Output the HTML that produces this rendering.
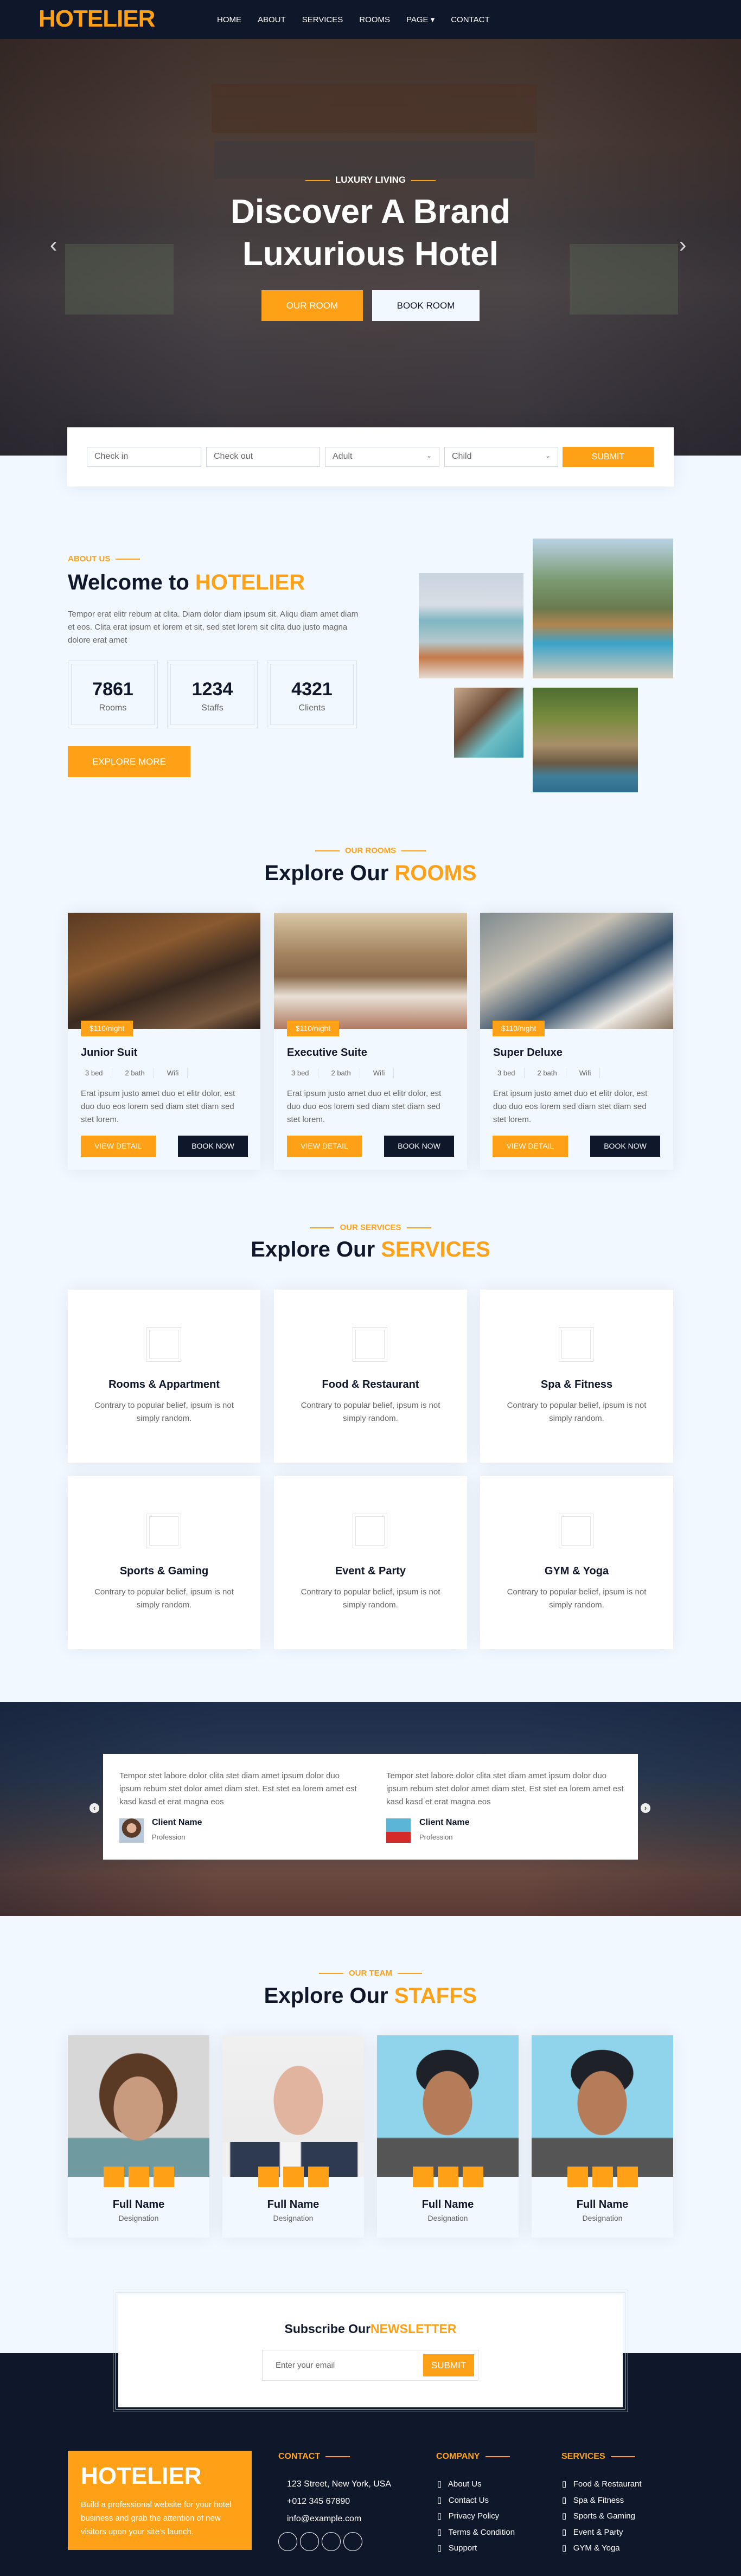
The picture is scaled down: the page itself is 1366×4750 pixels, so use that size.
<!DOCTYPE html>
<html><head><meta charset="utf-8">
<style>
*{margin:0;padding:0;box-sizing:border-box}
body{width:1366px;height:4750px;position:relative;background:#F1F8FF;font-family:"Liberation Sans",Arial,sans-serif;color:#666565;overflow:hidden}
.a{position:absolute}
.or{color:#FEA116}
.c{text-align:center}
.lbl{font-size:15px;font-weight:bold;color:#FEA116;text-transform:uppercase;white-space:nowrap}
.ln{display:inline-block;width:45px;height:2px;background:#FEA116;vertical-align:middle;margin:0 10px}
.h2{font-size:40px;font-weight:bold;color:#0F172B;width:1366px;left:0;text-align:center}
.btn{background:#FEA116;color:#fff;font-size:15px;text-align:center;text-transform:uppercase}
.card{background:#F1F8FF;box-shadow:0 0 30px rgba(0,0,0,.08)}
.wcard{background:#fff;box-shadow:0 0 30px rgba(0,0,0,.07)}
.ic{width:64px;height:64px;border:1px solid #e2e2e2;padding:4px}
.ic div{width:100%;height:100%;border:1px solid #e2e2e2}
.inp{background:#fff;border:1px solid #ced4da;height:37px;font-size:16px;color:#666;padding:8px 13px}
</style></head><body>

<!-- NAV -->
<div class="a" style="left:0;top:0;width:1366px;height:72px;background:#0F172B"></div>
<div class="a" style="left:71px;top:10px;font-size:44px;font-weight:bold;color:#FEA116;letter-spacing:-1px">HOTELIER</div>
<div class="a" style="left:400px;top:27px;font-size:15px;color:#fff;white-space:nowrap">
<span style="margin-right:30px">HOME</span><span style="margin-right:30px">ABOUT</span><span style="margin-right:30px">SERVICES</span><span style="margin-right:30px">ROOMS</span><span style="margin-right:30px">PAGE ▾</span><span>CONTACT</span></div>

<!-- HERO -->
<div class="a" style="left:0;top:72px;width:1366px;height:768px;background:linear-gradient(#3e2e28 0%,#4a3a34 25%,#3f3a3e 45%,#4a4448 60%,#3e3a42 75%,#2f2d38 100%)"></div>
<div class="a" style="left:0;top:72px;width:1366px;height:768px;background:linear-gradient(90deg,rgba(30,25,30,.35),rgba(90,80,70,.15) 30%,rgba(90,70,55,.2) 50%,rgba(90,80,70,.15) 70%,rgba(30,25,30,.35))"></div>
<div class="a" style="left:390px;top:155px;width:600px;height:90px;background:#4b3328;opacity:.7"></div>
<div class="a" style="left:395px;top:260px;width:590px;height:70px;background:#3e3a3e;opacity:.6"></div>
<div class="a" style="left:120px;top:450px;width:200px;height:130px;background:#56604f;opacity:.5"></div>
<div class="a" style="left:1050px;top:450px;width:200px;height:130px;background:#56604f;opacity:.5"></div>
<div class="a" style="left:92px;top:430px;font-size:40px;color:#ddd">‹</div>
<div class="a" style="left:1252px;top:430px;font-size:40px;color:#ddd">›</div>
<div class="a c" style="left:0;width:1366px;top:322px;font-size:17px;font-weight:bold;color:#fff"><span class="ln"></span>LUXURY LIVING<span class="ln"></span></div>
<div class="a c" style="left:0;width:1366px;top:352px;font-size:62px;font-weight:bold;color:#fff;line-height:78px">Discover A Brand<br>Luxurious Hotel</div>
<div class="a btn" style="left:482px;top:535px;width:187px;height:57px;line-height:57px;font-size:17px">OUR ROOM</div>
<div class="a" style="left:686px;top:535px;width:198px;height:57px;line-height:57px;background:#F1F8FF;color:#0F172B;text-align:center;font-size:17px">BOOK ROOM</div>

<!-- BOOKING -->
<div class="a" style="left:124px;top:788px;width:1118px;height:109px;background:#fff;box-shadow:0 0 30px rgba(0,0,0,.08)"></div>
<div class="a inp" style="left:160px;top:824px;width:211px">Check in</div>
<div class="a inp" style="left:380px;top:824px;width:210px">Check out</div>
<div class="a inp" style="left:599px;top:824px;width:211px">Adult<span style="float:right;font-size:12px">⌄</span></div>
<div class="a inp" style="left:819px;top:824px;width:210px">Child<span style="float:right;font-size:12px">⌄</span></div>
<div class="a btn" style="left:1037px;top:824px;width:168px;height:37px;line-height:37px;font-size:16px">SUBMIT</div>

<!-- ABOUT -->
<div class="a lbl" style="left:125px;top:1022px">ABOUT US<span class="ln"></span></div>
<div class="a" style="left:125px;top:1052px;font-size:40px;font-weight:bold;color:#0F172B;white-space:nowrap">Welcome to <span class="or">HOTELIER</span></div>
<div class="a" style="left:125px;top:1121px;width:540px;font-size:15px;line-height:24px">Tempor erat elitr rebum at clita. Diam dolor diam ipsum sit. Aliqu diam amet diam et eos. Clita erat ipsum et lorem et sit, sed stet lorem sit clita duo justo magna dolore erat amet</div>
<div class="a" style="left:125px;top:1218px;width:166px;height:125px;border:1px solid #dee2e6;padding:5px"><div style="border:1px solid #dee2e6;height:100%;text-align:center;padding-top:27px"><div style="font-size:34px;font-weight:bold;color:#0F172B">7861</div><div style="font-size:16px;margin-top:6px">Rooms</div></div></div>
<div class="a" style="left:308px;top:1218px;width:167px;height:125px;border:1px solid #dee2e6;padding:5px"><div style="border:1px solid #dee2e6;height:100%;text-align:center;padding-top:27px"><div style="font-size:34px;font-weight:bold;color:#0F172B">1234</div><div style="font-size:16px;margin-top:6px">Staffs</div></div></div>
<div class="a" style="left:492px;top:1218px;width:166px;height:125px;border:1px solid #dee2e6;padding:5px"><div style="border:1px solid #dee2e6;height:100%;text-align:center;padding-top:27px"><div style="font-size:34px;font-weight:bold;color:#0F172B">4321</div><div style="font-size:16px;margin-top:6px">Clients</div></div></div>
<div class="a btn" style="left:125px;top:1376px;width:226px;height:57px;line-height:57px;font-size:17px">EXPLORE MORE</div>
<div class="a" style="left:772px;top:1057px;width:193px;height:194px;background:linear-gradient(#c9d4e0 0%,#d9dde4 30%,#7fb6c2 45%,#b4c7cc 65%,#c47a4a 80%,#e4dcd4 100%)"></div>
<div class="a" style="left:982px;top:993px;width:259px;height:258px;background:linear-gradient(#b9d3e6 0%,#7a9a70 30%,#6b7a50 50%,#b08550 62%,#3aa3c8 75%,#d8ccbb 100%)"></div>
<div class="a" style="left:837px;top:1268px;width:128px;height:129px;background:linear-gradient(135deg,#c9a98c 0%,#6a4a35 40%,#6dbdc5 65%,#3a9aae 100%)"></div>
<div class="a" style="left:982px;top:1268px;width:194px;height:193px;background:linear-gradient(#4f6e32 0%,#7a8c3e 30%,#a88f6a 55%,#6c5a44 72%,#3f7e9a 85%,#2f6e8e 100%)"></div>

<!-- ROOMS -->
<div class="a lbl c" style="left:0;width:1366px;top:1560px"><span class="ln"></span>OUR ROOMS<span class="ln"></span></div>
<div class="a h2" style="top:1588px">Explore Our <span class="or">ROOMS</span></div>

<div class="a card" style="left:125px;top:1683px;width:355px;height:474px"></div>
<div class="a card" style="left:505px;top:1683px;width:356px;height:474px"></div>
<div class="a card" style="left:885px;top:1683px;width:356px;height:474px"></div>
<div class="a" style="left:125px;top:1683px;width:355px;height:214px;background:linear-gradient(160deg,#5a3a22 0%,#8a5a30 35%,#3a2a20 60%,#7a5a40 85%,#2a1e18 100%)"></div>
<div class="a" style="left:505px;top:1683px;width:356px;height:214px;background:linear-gradient(#d9c7a6 0%,#a4845f 35%,#8a6a4a 55%,#e9e1d6 72%,#b07a62 100%)"></div>
<div class="a" style="left:885px;top:1683px;width:356px;height:214px;background:linear-gradient(150deg,#7f8b8f 0%,#c9c2b5 35%,#2e4a66 60%,#ece8e2 80%,#8b7560 100%)"></div>

<div class="a btn" style="left:149px;top:1882px;width:96px;height:29px;line-height:29px;font-size:14px;text-transform:none">$110/night</div>
<div class="a btn" style="left:529px;top:1882px;width:96px;height:29px;line-height:29px;font-size:14px;text-transform:none">$110/night</div>
<div class="a btn" style="left:908px;top:1882px;width:96px;height:29px;line-height:29px;font-size:14px;text-transform:none">$110/night</div>

<div class="a" style="left:149px;top:1930px;font-size:20px;font-weight:bold;color:#0F172B">Junior Suit</div>
<div class="a" style="left:529px;top:1930px;font-size:20px;font-weight:bold;color:#0F172B">Executive Suite</div>
<div class="a" style="left:909px;top:1930px;font-size:20px;font-weight:bold;color:#0F172B">Super Deluxe</div>

<div class="a" style="left:149px;top:1969px;font-size:13px;white-space:nowrap"><span style="display:inline-block;padding:2px 16px 2px 8px;border-right:1px solid #dee2e6">3 bed</span><span style="display:inline-block;padding:2px 16px 2px 24px;border-right:1px solid #dee2e6">2 bath</span><span style="display:inline-block;padding:2px 16px 2px 24px;border-right:1px solid #dee2e6">Wifi</span></div>
<div class="a" style="left:529px;top:1969px;font-size:13px;white-space:nowrap"><span style="display:inline-block;padding:2px 16px 2px 8px;border-right:1px solid #dee2e6">3 bed</span><span style="display:inline-block;padding:2px 16px 2px 24px;border-right:1px solid #dee2e6">2 bath</span><span style="display:inline-block;padding:2px 16px 2px 24px;border-right:1px solid #dee2e6">Wifi</span></div>
<div class="a" style="left:909px;top:1969px;font-size:13px;white-space:nowrap"><span style="display:inline-block;padding:2px 16px 2px 8px;border-right:1px solid #dee2e6">3 bed</span><span style="display:inline-block;padding:2px 16px 2px 24px;border-right:1px solid #dee2e6">2 bath</span><span style="display:inline-block;padding:2px 16px 2px 24px;border-right:1px solid #dee2e6">Wifi</span></div>

<div class="a" style="left:149px;top:2005px;width:310px;font-size:15px;line-height:24px">Erat ipsum justo amet duo et elitr dolor, est duo duo eos lorem sed diam stet diam sed stet lorem.</div>
<div class="a" style="left:529px;top:2005px;width:310px;font-size:15px;line-height:24px">Erat ipsum justo amet duo et elitr dolor, est duo duo eos lorem sed diam stet diam sed stet lorem.</div>
<div class="a" style="left:909px;top:2005px;width:310px;font-size:15px;line-height:24px">Erat ipsum justo amet duo et elitr dolor, est duo duo eos lorem sed diam stet diam sed stet lorem.</div>

<div class="a btn" style="left:149px;top:2094px;width:138px;height:39px;line-height:39px;font-size:14px">VIEW DETAIL</div>
<div class="a" style="left:328px;top:2094px;width:129px;height:39px;line-height:39px;font-size:14px;background:#0F172B;color:#fff;text-align:center">BOOK NOW</div>
<div class="a btn" style="left:529px;top:2094px;width:138px;height:39px;line-height:39px;font-size:14px">VIEW DETAIL</div>
<div class="a" style="left:708px;top:2094px;width:129px;height:39px;line-height:39px;font-size:14px;background:#0F172B;color:#fff;text-align:center">BOOK NOW</div>
<div class="a btn" style="left:908px;top:2094px;width:139px;height:39px;line-height:39px;font-size:14px">VIEW DETAIL</div>
<div class="a" style="left:1088px;top:2094px;width:129px;height:39px;line-height:39px;font-size:14px;background:#0F172B;color:#fff;text-align:center">BOOK NOW</div>

<!-- SERVICES -->
<div class="a lbl c" style="left:0;width:1366px;top:2255px"><span class="ln"></span>OUR SERVICES<span class="ln"></span></div>
<div class="a h2" style="top:2282px">Explore Our <span class="or">SERVICES</span></div>

<div class="a wcard" style="left:125px;top:2378px;width:355px;height:319px"></div>
<div class="a wcard" style="left:505px;top:2378px;width:356px;height:319px"></div>
<div class="a wcard" style="left:885px;top:2378px;width:356px;height:319px"></div>
<div class="a wcard" style="left:125px;top:2722px;width:355px;height:319px"></div>
<div class="a wcard" style="left:505px;top:2722px;width:356px;height:319px"></div>
<div class="a wcard" style="left:885px;top:2722px;width:356px;height:319px"></div>

<div class="a ic" style="left:270px;top:2447px"><div></div></div>
<div class="a ic" style="left:650px;top:2447px"><div></div></div>
<div class="a ic" style="left:1030px;top:2447px"><div></div></div>
<div class="a ic" style="left:270px;top:2791px"><div></div></div>
<div class="a ic" style="left:650px;top:2791px"><div></div></div>
<div class="a ic" style="left:1030px;top:2791px"><div></div></div>

<div class="a c" style="left:125px;top:2542px;width:355px;font-size:20px;font-weight:bold;color:#0F172B">Rooms &amp; Appartment</div>
<div class="a c" style="left:505px;top:2542px;width:356px;font-size:20px;font-weight:bold;color:#0F172B">Food &amp; Restaurant</div>
<div class="a c" style="left:885px;top:2542px;width:356px;font-size:20px;font-weight:bold;color:#0F172B">Spa &amp; Fitness</div>
<div class="a c" style="left:125px;top:2886px;width:355px;font-size:20px;font-weight:bold;color:#0F172B">Sports &amp; Gaming</div>
<div class="a c" style="left:505px;top:2886px;width:356px;font-size:20px;font-weight:bold;color:#0F172B">Event &amp; Party</div>
<div class="a c" style="left:885px;top:2886px;width:356px;font-size:20px;font-weight:bold;color:#0F172B">GYM &amp; Yoga</div>

<div class="a c" style="left:160px;top:2580px;width:285px;font-size:15px;line-height:24px">Contrary to popular belief, ipsum is not simply random.</div>
<div class="a c" style="left:540px;top:2580px;width:286px;font-size:15px;line-height:24px">Contrary to popular belief, ipsum is not simply random.</div>
<div class="a c" style="left:920px;top:2580px;width:286px;font-size:15px;line-height:24px">Contrary to popular belief, ipsum is not simply random.</div>
<div class="a c" style="left:160px;top:2924px;width:285px;font-size:15px;line-height:24px">Contrary to popular belief, ipsum is not simply random.</div>
<div class="a c" style="left:540px;top:2924px;width:286px;font-size:15px;line-height:24px">Contrary to popular belief, ipsum is not simply random.</div>
<div class="a c" style="left:920px;top:2924px;width:286px;font-size:15px;line-height:24px">Contrary to popular belief, ipsum is not simply random.</div>

<!-- TESTIMONIAL -->
<div class="a" style="left:0;top:3138px;width:1366px;height:395px;background:linear-gradient(#1d2d4a 0%,#2b3b55 35%,#4a4448 60%,#6b4a40 80%,#5a3a34 100%)"></div>
<div class="a" style="left:0;top:3138px;width:1366px;height:395px;background:linear-gradient(90deg,rgba(15,23,43,.35),rgba(15,23,43,0) 30%,rgba(15,23,43,0) 70%,rgba(15,23,43,.25))"></div>
<div class="a" style="left:190px;top:3234px;width:986px;height:195px;background:#fff"></div>
<div class="a" style="left:220px;top:3263px;width:440px;font-size:15px;line-height:24px">Tempor stet labore dolor clita stet diam amet ipsum dolor duo ipsum rebum stet dolor amet diam stet. Est stet ea lorem amet est kasd kasd et erat magna eos</div>
<div class="a" style="left:712px;top:3263px;width:440px;font-size:15px;line-height:24px">Tempor stet labore dolor clita stet diam amet ipsum dolor duo ipsum rebum stet dolor amet diam stet. Est stet ea lorem amet est kasd kasd et erat magna eos</div>
<div class="a" style="left:220px;top:3353px;width:45px;height:45px;background:radial-gradient(circle at 50% 40%,#e2b49a 0 25%,#5a3a28 26% 50%,#b8c8d8 51%)"></div>
<div class="a" style="left:712px;top:3353px;width:45px;height:45px;background:linear-gradient(#5ab6d4 0 55%,#d42a2a 56%)"></div>
<div class="a" style="left:280px;top:3352px;font-size:16px;font-weight:bold;color:#0F172B">Client Name</div>
<div class="a" style="left:280px;top:3380px;font-size:13px">Profession</div>
<div class="a" style="left:773px;top:3352px;font-size:16px;font-weight:bold;color:#0F172B">Client Name</div>
<div class="a" style="left:773px;top:3380px;font-size:13px">Profession</div>
<div class="a" style="left:165px;top:3325px;width:18px;height:18px;border-radius:50%;background:#eee;color:#333;font-size:13px;line-height:17px;text-align:center;font-weight:bold">‹</div>
<div class="a" style="left:1181px;top:3325px;width:18px;height:18px;border-radius:50%;background:#eee;color:#333;font-size:13px;line-height:17px;text-align:center;font-weight:bold">›</div>

<!-- TEAM -->
<div class="a lbl c" style="left:0;width:1366px;top:3630px"><span class="ln"></span>OUR TEAM<span class="ln"></span></div>
<div class="a h2" style="top:3658px">Explore Our <span class="or">STAFFS</span></div>

<div class="a card" style="left:125px;top:3753px;width:261px;height:373px"></div>
<div class="a card" style="left:410px;top:3753px;width:261px;height:373px"></div>
<div class="a card" style="left:695px;top:3753px;width:261px;height:373px"></div>
<div class="a card" style="left:980px;top:3753px;width:261px;height:373px"></div>
<div class="a" style="left:125px;top:3753px;width:261px;height:261px;background:radial-gradient(ellipse 50px 65px at 130px 135px,#c89a7e 0 90%,transparent 92%),radial-gradient(ellipse 75px 80px at 130px 110px,#5a3a24 0 95%,transparent 97%),linear-gradient(#d7d7d7 0 72%,#6f9aa0 73%)"></div>
<div class="a" style="left:410px;top:3753px;width:261px;height:261px;background:radial-gradient(ellipse 50px 70px at 140px 120px,#e0b49e 0 90%,transparent 92%),linear-gradient(#f0f0f0,#eaeaea)"></div>
<div class="a" style="left:410px;top:3950px;width:261px;height:64px;background:linear-gradient(90deg,#f0f0f0 0 5%,#2e3a50 6% 40%,#f4f4f4 41% 55%,#2e3a50 56% 95%,#f0f0f0 96%)"></div>
<div class="a" style="left:695px;top:3753px;width:261px;height:261px;background:radial-gradient(ellipse 50px 65px at 130px 125px,#b57c5a 0 90%,transparent 92%),radial-gradient(ellipse 60px 45px at 130px 70px,#1e2228 0 95%,transparent 97%),linear-gradient(#8fd4ea 0 72%,#555 73%)"></div>
<div class="a" style="left:980px;top:3753px;width:261px;height:261px;background:radial-gradient(ellipse 50px 65px at 130px 125px,#b57c5a 0 90%,transparent 92%),radial-gradient(ellipse 60px 45px at 130px 70px,#1e2228 0 95%,transparent 97%),linear-gradient(#8fd4ea 0 72%,#555 73%)"></div>

<div class="a" style="left:191px;top:3995px;width:130px;height:38px;background:linear-gradient(90deg,#FEA116 0 38px,transparent 38px 46px,#FEA116 46px 84px,transparent 84px 92px,#FEA116 92px 130px)"></div>
<div class="a" style="left:476px;top:3995px;width:130px;height:38px;background:linear-gradient(90deg,#FEA116 0 38px,transparent 38px 46px,#FEA116 46px 84px,transparent 84px 92px,#FEA116 92px 130px)"></div>
<div class="a" style="left:761px;top:3995px;width:130px;height:38px;background:linear-gradient(90deg,#FEA116 0 38px,transparent 38px 46px,#FEA116 46px 84px,transparent 84px 92px,#FEA116 92px 130px)"></div>
<div class="a" style="left:1046px;top:3995px;width:130px;height:38px;background:linear-gradient(90deg,#FEA116 0 38px,transparent 38px 46px,#FEA116 46px 84px,transparent 84px 92px,#FEA116 92px 130px)"></div>

<div class="a c" style="left:125px;top:4054px;width:261px;font-size:20px;font-weight:bold;color:#0F172B">Full Name</div>
<div class="a c" style="left:410px;top:4054px;width:261px;font-size:20px;font-weight:bold;color:#0F172B">Full Name</div>
<div class="a c" style="left:695px;top:4054px;width:261px;font-size:20px;font-weight:bold;color:#0F172B">Full Name</div>
<div class="a c" style="left:980px;top:4054px;width:261px;font-size:20px;font-weight:bold;color:#0F172B">Full Name</div>
<div class="a c" style="left:125px;top:4082px;width:261px;font-size:14px">Designation</div>
<div class="a c" style="left:410px;top:4082px;width:261px;font-size:14px">Designation</div>
<div class="a c" style="left:695px;top:4082px;width:261px;font-size:14px">Designation</div>
<div class="a c" style="left:980px;top:4082px;width:261px;font-size:14px">Designation</div>

<!-- FOOTER -->
<div class="a" style="left:0;top:4339px;width:1366px;height:411px;background:#0F172B"></div>
<div class="a" style="left:208px;top:4222px;width:950px;height:226px;border:1px solid #dde3ea"></div>
<div class="a" style="left:213px;top:4227px;width:940px;height:216px;border:1px solid #dde3ea"></div>
<div class="a" style="left:218px;top:4231px;width:930px;height:208px;background:#fff"></div>
<div class="a c" style="left:218px;top:4281px;width:930px;font-size:23px;font-weight:bold;color:#0F172B">Subscribe Our<span class="or">NEWSLETTER</span></div>
<div class="a" style="left:483px;top:4333px;width:399px;height:57px;border:1px solid #dee2e6;font-size:15px;color:#666;padding:19px 0 0 24px">Enter your email</div>
<div class="a btn" style="left:780px;top:4341px;width:94px;height:41px;line-height:41px;font-size:17px">SUBMIT</div>

<div class="a" style="left:125px;top:4519px;width:339px;height:183px;background:#FEA116"></div>
<div class="a" style="left:149px;top:4541px;font-size:44px;font-weight:bold;color:#fff">HOTELIER</div>
<div class="a" style="left:149px;top:4606px;width:300px;font-size:15px;line-height:25px;color:#fff">Build a professional website for your hotel business and grab the attention of new visitors upon your site's launch.</div>

<div class="a lbl" style="left:513px;top:4521px;font-size:16px">CONTACT<span class="ln"></span></div>
<div class="a lbl" style="left:804px;top:4521px;font-size:16px">COMPANY<span class="ln"></span></div>
<div class="a lbl" style="left:1035px;top:4521px;font-size:16px">SERVICES<span class="ln"></span></div>

<div class="a" style="left:529px;top:4565px;font-size:16px;color:#fff;line-height:32px">123 Street, New York, USA<br>+012 345 67890<br>info@example.com</div>
<div class="a" style="left:513px;top:4669px;width:35px;height:35px;border:1px solid #fff;border-radius:50%"></div>
<div class="a" style="left:553px;top:4669px;width:35px;height:35px;border:1px solid #fff;border-radius:50%"></div>
<div class="a" style="left:593px;top:4669px;width:35px;height:35px;border:1px solid #fff;border-radius:50%"></div>
<div class="a" style="left:633px;top:4669px;width:35px;height:35px;border:1px solid #fff;border-radius:50%"></div>

<div class="a" style="left:806px;top:4566px;font-size:15px;color:#fff;line-height:29.5px;white-space:nowrap">▯&nbsp;&nbsp; About Us<br>▯&nbsp;&nbsp; Contact Us<br>▯&nbsp;&nbsp; Privacy Policy<br>▯&nbsp;&nbsp; Terms &amp; Condition<br>▯&nbsp;&nbsp; Support</div>
<div class="a" style="left:1036px;top:4566px;font-size:15px;color:#fff;line-height:29.5px;white-space:nowrap">▯&nbsp;&nbsp; Food &amp; Restaurant<br>▯&nbsp;&nbsp; Spa &amp; Fitness<br>▯&nbsp;&nbsp; Sports &amp; Gaming<br>▯&nbsp;&nbsp; Event &amp; Party<br>▯&nbsp;&nbsp; GYM &amp; Yoga</div>
</body></html>
